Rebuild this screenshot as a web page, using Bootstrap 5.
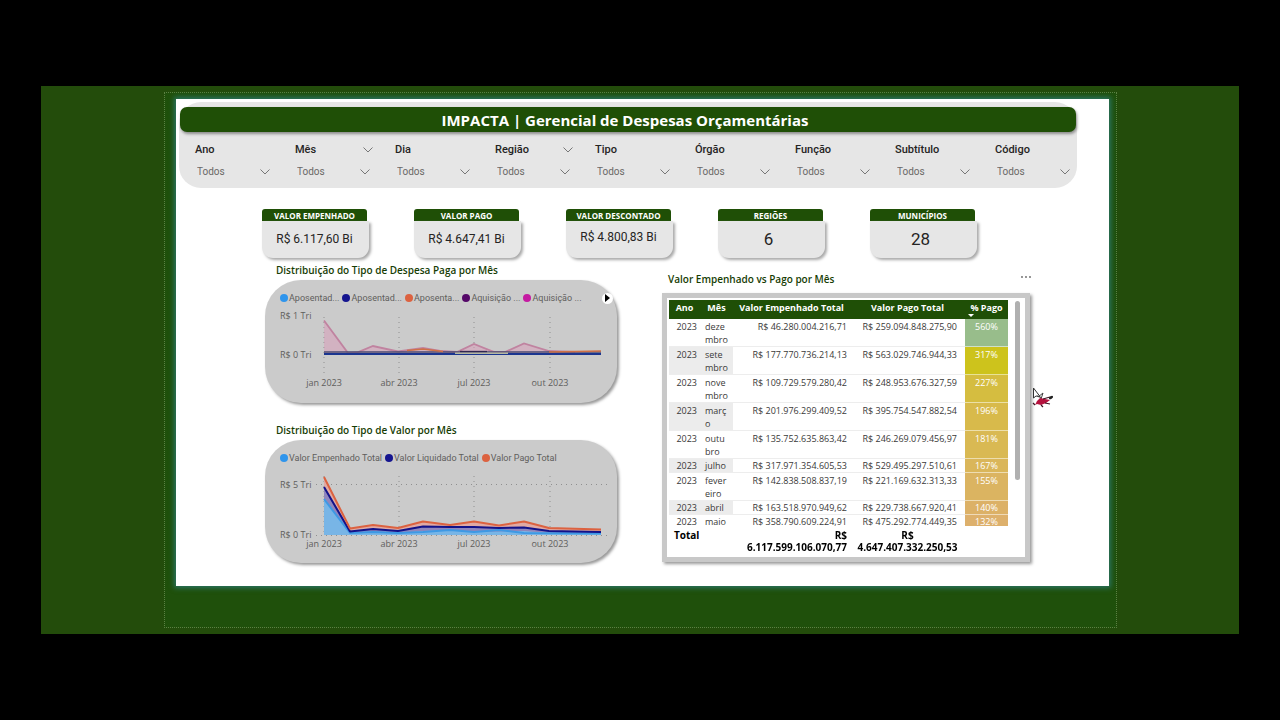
<!DOCTYPE html>
<html lang="pt-BR">
<head>
<meta charset="utf-8">
<meta name="viewport" content="width=device-width, initial-scale=1">
<title>IMPACTA | Gerencial de Despesas Orçamentárias</title>
<link href="https://cdn.jsdelivr.net/npm/bootstrap@5.3.0/dist/css/bootstrap.min.css" rel="stylesheet">
<style>
  :root { --green: #1f4f06; --ink: #252423; --muted: #605e5c; }
  body { background: #000; color: var(--ink); font-family: "Open Sans", "Noto Sans", sans-serif; font-size: 9px; line-height: 13px; padding: 86px 41px; }
  .stage { background: #234c0b; padding: 6px 122px 6px 123px; }
  .frame { border: 1px dotted #5c8043; background: #1f500b; padding: 6px 7px 41px 11px; }
  .sheet { background: #fff; box-shadow: 0 0 5px 2px #2a7463; padding: 3px 0 23px 3px; }

  .filters { background: #e6e6e6; border-radius: 22px; padding-top: 5px; margin-right: 32px; }
  .banner { background: var(--green); color: #fff; font-size: 15px; line-height: 26px; height: 25px; font-weight: 700; border-radius: 7px; box-shadow: 1px 2px 3px #8c8c8c; margin: 0 1px; padding-right: 6px; }
  .filter-grid { display: grid; grid-template-columns: repeat(9, 1fr); gap: 22px; padding: 11px 4px 7px 16px; }
  .din { font-family: Roboto, "Noto Sans", sans-serif; }
  .filter-grid label { font-size: 11px; line-height: 14px; font-weight: 500; }
  .filter-grid select { appearance: none; background: transparent; border: 0; color: #6b6967; font-size: 10px; line-height: 18px; height: 18px; padding: 0 2px; width: 100%; }
  .chev { width: 10px; height: 6px; fill: none; stroke: #777; stroke-width: 1; display: block; }
  .pick { position: relative; margin-top: 6px; }
  .pick .chev { position: absolute; right: 3px; top: 6px; pointer-events: none; }
  .plain { border: 0; background: transparent; padding: 0; line-height: 1; }

  .kpis { display: grid; grid-template-columns: repeat(5, 1fr); gap: 45px; margin: 21px 132px 0 83px; }
  .kpi-name { background: var(--green); color: #fff; font-size: 8px; line-height: 14px; font-weight: 700; border-radius: 3px 3px 0 0; margin-right: 2px; height: 12px; }
  .kpi-value { background: #e6e6e6; height: 37px; font-size: 12px; border-radius: 0 0 11px 11px; box-shadow: 2px 2px 3px #a8a8a8; padding-right: 2px; }
  .kpi-value.big { font-size: 17px; padding-right: 6px; }

  .board { display: grid; grid-template-columns: 352fr 368fr; gap: 45px; margin: 0 79px 0 86px; }
  .heading { color: #173d04; font-size: 10px; line-height: 16px; font-weight: 600; margin: 0; }
  .left-head { padding-left: 11px; margin: 4px 0 2px; }
  .left-head.second { margin-top: 19px; }
  .chart { background: #cbcbcb; border-radius: 36px; box-shadow: 2px 2px 3px #999; padding-top: 12px; color: var(--muted); }
  .legend { height: 12px; line-height: 12px; padding: 0 4px 0 15px; }
  .keys { gap: 3px; }
  .dot { width: 8px; height: 8px; border-radius: 50%; flex: none; margin-right: 1px; }
  .chart svg.plot { display: block; width: 100%; height: auto; }
  .plot text { font-size: 9px; fill: #605e5c; }
  .grid-line { stroke: #8f8f8f; stroke-width: 1; stroke-dasharray: 1 4; fill: none; }
  .next { width: 11px; height: 11px; border-radius: 50%; background: #fff; }

  .right-head { margin: 13px 0 6px; padding: 0 0 0 6px; }
  .right-head .plain { margin-right: -2px; }
  .table-box { border: 5px solid #c8c8c8; background: #fff; box-shadow: 2px 2px 3px #999; padding: 2px 5px 4px 2px; }
  .scroller { height: 253px; overflow: hidden; flex: 1; margin-right: 7px; }
  .thumb { width: 5px; height: 179px; border-radius: 3px; background: #b0b0b0; margin-top: 1px; }
  .data { width: 100%; table-layout: fixed; border-collapse: separate; border-spacing: 0; color: #3a3938; }
  .data th, .data td { padding: 1px 3px 0; vertical-align: top; }
  .data thead th { background: var(--green); color: #fff; font-weight: 700; height: 19px; text-align: center; padding: 1px 0 0; position: sticky; top: 0; }
  .data tbody td { height: 14px; border-bottom: 1px solid #ededed; line-height: 12px; }
  .data tbody tr.tall td { height: 28px; line-height: 13px; }
  .data tbody tr:nth-child(even) td:nth-child(-n+2) { background: #ececec; }
  .data td:nth-child(2) { padding-left: 5px; }
  .data .pct { color: #fff; text-align: center; border-bottom-color: #fff8; padding-left: 0; padding-right: 0; }
  .data tfoot td, .data tfoot th { background: #fff; color: #000; font-size: 10px; line-height: 12px; font-weight: 700; position: sticky; bottom: 0; padding-top: 3px; }
  .data tfoot th { padding-left: 5px; }
  .data tfoot td.text-center { padding: 3px 0 0 5px; }
  .sorted { position: absolute; left: 3px; bottom: 2px; border: 3px solid transparent; border-top-color: #fff; border-bottom: 0; }
  .pointer { position: absolute; right: 55px; top: 288px; width: 22px; height: 21px; }
</style>
</head>
<body>
<main class="stage">
 <div class="frame">
  <div class="sheet position-relative">
   <section class="filters">
    <h1 class="banner text-center">IMPACTA | Gerencial de Despesas Orçamentárias</h1>
    <div class="filter-grid din" id="filters"></div>
   </section>

   <section class="kpis text-center">
    <div><div class="kpi-name">VALOR EMPENHADO</div><div class="kpi-value din d-flex align-items-center justify-content-center">R$ 6.117,60 Bi</div></div>
    <div><div class="kpi-name">VALOR PAGO</div><div class="kpi-value din d-flex align-items-center justify-content-center">R$ 4.647,41 Bi</div></div>
    <div><div class="kpi-name">VALOR DESCONTADO</div><div class="kpi-value din d-flex align-items-center justify-content-center pb-1">R$ 4.800,83 Bi</div></div>
    <div><div class="kpi-name">REGIÕES</div><div class="kpi-value big din d-flex align-items-center justify-content-center">6</div></div>
    <div><div class="kpi-name">MUNICÍPIOS</div><div class="kpi-value big din d-flex align-items-center justify-content-center">28</div></div>
   </section>

   <div class="board">
    <div>
     <h2 class="heading left-head">Distribuição do Tipo de Despesa Paga por Mês</h2>
     <section class="chart">
      <div class="legend din d-flex align-items-center justify-content-between">
       <div class="keys d-flex">
        <span class="d-flex align-items-center"><i class="dot" style="background:#2f95ec"></i>Aposentad...</span>
        <span class="d-flex align-items-center"><i class="dot" style="background:#15158f"></i>Aposentad...</span>
        <span class="d-flex align-items-center"><i class="dot" style="background:#dc6240"></i>Aposenta...</span>
        <span class="d-flex align-items-center"><i class="dot" style="background:#550868"></i>Aquisição ...</span>
        <span class="d-flex align-items-center"><i class="dot" style="background:#c51ba2"></i>Aquisição ...</span>
       </div>
       <button type="button" class="plain next d-flex align-items-center justify-content-center" aria-label="Próximo"><svg width="5" height="8" viewBox="0 0 5 8"><path d="M0 0L5 4L0 8Z"/></svg></button>
      </div>
      <svg class="plot" viewBox="0 0 352 99">
       <path class="grid-line" d="M59 13V71M134 13V71M209 13V71M285 13V71"/>
       <path d="M59 16.500L83 49L92 48.500L108 42L133 47.500L158 44L192 48L209 40L233 48L243 47.500L259 39.500L284 47L336 49V50H59Z" fill="#d99ab8" fill-opacity=".5"/>
       <path d="M59 16.500L83 49L92 48.500L108 42L133 47.500L158 44L175 47L192 48L209 40L229 48L240 48L259 39.500L284 47L310 48" fill="none" stroke="#c083a0" stroke-width="1.800"/>
       <path d="M59 48H336" stroke="#4b4a70" stroke-width="1.500"/>
       <path d="M142 46.500L158 45L178 47.500M284 48L336 47" fill="none" stroke="#cf7047" stroke-width="1.500"/>
       <path d="M59 50H336" stroke="#1b3590" stroke-width="2.200"/>
       <path d="M190 49.300H243" stroke="#b4b8a2" stroke-width="1.400"/>
       <path d="M195 47.500H222" stroke="#302550" stroke-width="1.300"/>
       <text x="15" y="15">R$ 1 Tri</text><text x="15" y="54">R$ 0 Tri</text>
       <g text-anchor="middle"><text x="59" y="82">jan 2023</text><text x="134" y="82">abr 2023</text><text x="209" y="82">jul 2023</text><text x="285" y="82">out 2023</text></g>
      </svg>
     </section>
     <h2 class="heading left-head second">Distribuição do Tipo de Valor por Mês</h2>
     <section class="chart">
      <div class="legend keys din d-flex align-items-center">
       <span class="d-flex align-items-center"><i class="dot" style="background:#2f95ec"></i>Valor Empenhado Total</span>
       <span class="d-flex align-items-center"><i class="dot" style="background:#15158f"></i>Valor Liquidado Total</span>
       <span class="d-flex align-items-center"><i class="dot" style="background:#dc6240"></i>Valor Pago Total</span>
      </div>
      <svg class="plot" viewBox="0 0 352 99">
       <path class="grid-line" d="M59 12V71M134 12V71M209 12V71M285 12V71M51 20.500H344M51 71.500H344"/>
       <path d="M59 13L85 64.500L108 61L133 64L158 57.500L185 61L209 57.500L234 61.500L259 57.500L284 64L336 65.500V68L284 67L259 63.500L234 64L158 62.500L133 67L108 65L85 67.500L59 23Z" fill="#e0aaa4"/>
       <path d="M59 23L85 67.500L108 65L133 67L158 62.500L234 64L259 63.500L284 67L336 68V70H85L59 35Z" fill="#8f86bd"/>
       <path d="M59 35L85 69L108 68L133 69L158 67L185 66L209 68L259 67L284 69L336 69V71H59Z" fill="#78b5e6"/>
       <g fill="none" stroke-width="2" stroke-linejoin="round">
        <path d="M59 35L85 69L108 68L133 69L158 68L185 66L209 68L234 66L259 69L336 69.500" stroke="#3e99e4"/>
        <path d="M59 23L85 67.500L108 65L133 67L158 62.500L185 63L209 63L234 64L259 63.500L284 67L336 68" stroke="#12128a"/>
        <path d="M59 13L85 64.500L108 61L133 64L158 57.500L185 61L209 57.500L234 61.500L259 57.500L284 64L336 65.500" stroke="#dc6240"/>
       </g>
       <text x="15" y="24">R$ 5 Tri</text><text x="15" y="74">R$ 0 Tri</text>
       <g text-anchor="middle"><text x="59" y="83">jan 2023</text><text x="134" y="83">abr 2023</text><text x="209" y="83">jul 2023</text><text x="285" y="83">out 2023</text></g>
      </svg>
     </section>
    </div>

    <div>
     <div class="right-head d-flex justify-content-between align-items-start">
      <h2 class="heading">Valor Empenhado vs Pago por Mês</h2>
      <button type="button" class="plain" aria-label="Mais opções"><svg class="d-block" width="12" height="12" viewBox="0 0 12 12" fill="#666"><circle cx="2" cy="6" r=".9"/><circle cx="6" cy="6" r=".9"/><circle cx="10" cy="6" r=".9"/></svg></button>
     </div>
     <section class="table-box d-flex">
      <div class="scroller">
       <table class="data">
        <colgroup><col style="width:31px"><col style="width:33px"><col><col style="width:110px"><col style="width:5px"><col style="width:43px"></colgroup>
        <thead><tr><th>Ano</th><th>Mês</th><th>Valor Empenhado Total</th><th colspan="2">Valor Pago Total</th><th>% Pago<span class="sorted"></span></th></tr></thead>
        <tbody id="rows"></tbody>
        <tfoot><tr><th colspan="2">Total</th><td class="text-end">R$<br>6.117.599.106.070,77</td><td class="text-center">R$<br>4.647.407.332.250,53</td><td></td><td></td></tr></tfoot>
       </table>
      </div>
      <div class="thumb ms-auto"></div>
     </section>
    </div>
   </div>

   <svg class="pointer" viewBox="0 0 22 21" aria-hidden="true">
    <path d="M1.500 1V11L4 9L8 9.500Z" fill="#fff" stroke="#333"/>
    <path d="M6 10L11 6L9 12M5 9L10 11" fill="none" stroke="#444"/>
    <path d="M3 18L5 14L8 11L13 12L18 13L14 16L9 18L5 17Z" fill="#b5123e"/>
    <path d="M11 12L18 10M13 16L18 17M3 18L1 16M9 18L11 20" stroke="#3a1522" stroke-width="1.200"/>
    <ellipse cx="19" cy="10.500" rx="2.300" ry="1.300" fill="#222" transform="rotate(-30 19 10.500)"/>
   </svg>
  </div>
 </div>
</main>
<script>
  const chevron = '<svg class="chev" viewBox="0 0 10 6"><path d="M.5 .5L5 5L9.500 .5"/></svg>';
  const names = ['Ano', 'Mês', 'Dia', 'Região', 'Tipo', 'Órgão', 'Função', 'Subtítulo', 'Código'];
  const expandable = ['Mês', 'Região'];
  document.getElementById('filters').innerHTML = names.map((n, i) => `
    <div><div class="d-flex justify-content-between align-items-center"><label for="f${i}">${n}</label>
    ${expandable.includes(n) ? `<button type="button" class="plain" aria-label="Expandir ${n}">${chevron}</button>` : ''}</div>
    <div class="pick"><select id="f${i}"><option>Todos</option></select>${chevron}</div></div>`).join('');

  const rows = [
    [['deze', 'mbro'], '46.280.004.216,71', '259.094.848.275,90', 560, '#98bd8b'],
    [['sete', 'mbro'], '177.770.736.214,13', '563.029.746.944,33', 317, '#cdc31c'],
    [['nove', 'mbro'], '109.729.579.280,42', '248.953.676.327,59', 227, '#d5bd40'],
    [['març', 'o'], '201.976.299.409,52', '395.754.547.882,54', 196, '#d8ba4b'],
    [['outu', 'bro'], '135.752.635.863,42', '246.269.079.456,97', 181, '#d9b953'],
    [['julho'], '317.971.354.605,53', '529.495.297.510,61', 167, '#dab65a'],
    [['fever', 'eiro'], '142.838.508.837,19', '221.169.632.313,33', 155, '#dbb461'],
    [['abril'], '163.518.970.949,62', '229.738.667.920,41', 140, '#dcb167'],
    [['maio'], '358.790.609.224,91', '475.292.774.449,35', 132, '#ddb06c']
  ];
  document.getElementById('rows').innerHTML = rows.map(([m, e, p, pct, c]) => `
    <tr class="${m.length > 1 ? 'tall' : ''}"><td class="text-end">2023</td><td>${m.join('<br>')}</td>
    <td class="text-end">R$ ${e}</td><td class="text-end">R$ ${p}</td><td></td><td class="pct" style="background:${c}">${pct}%</td></tr>`).join('');
</script>
<script src="https://cdn.jsdelivr.net/npm/bootstrap@5.3.0/dist/js/bootstrap.bundle.min.js"></script>
</body>
</html>
